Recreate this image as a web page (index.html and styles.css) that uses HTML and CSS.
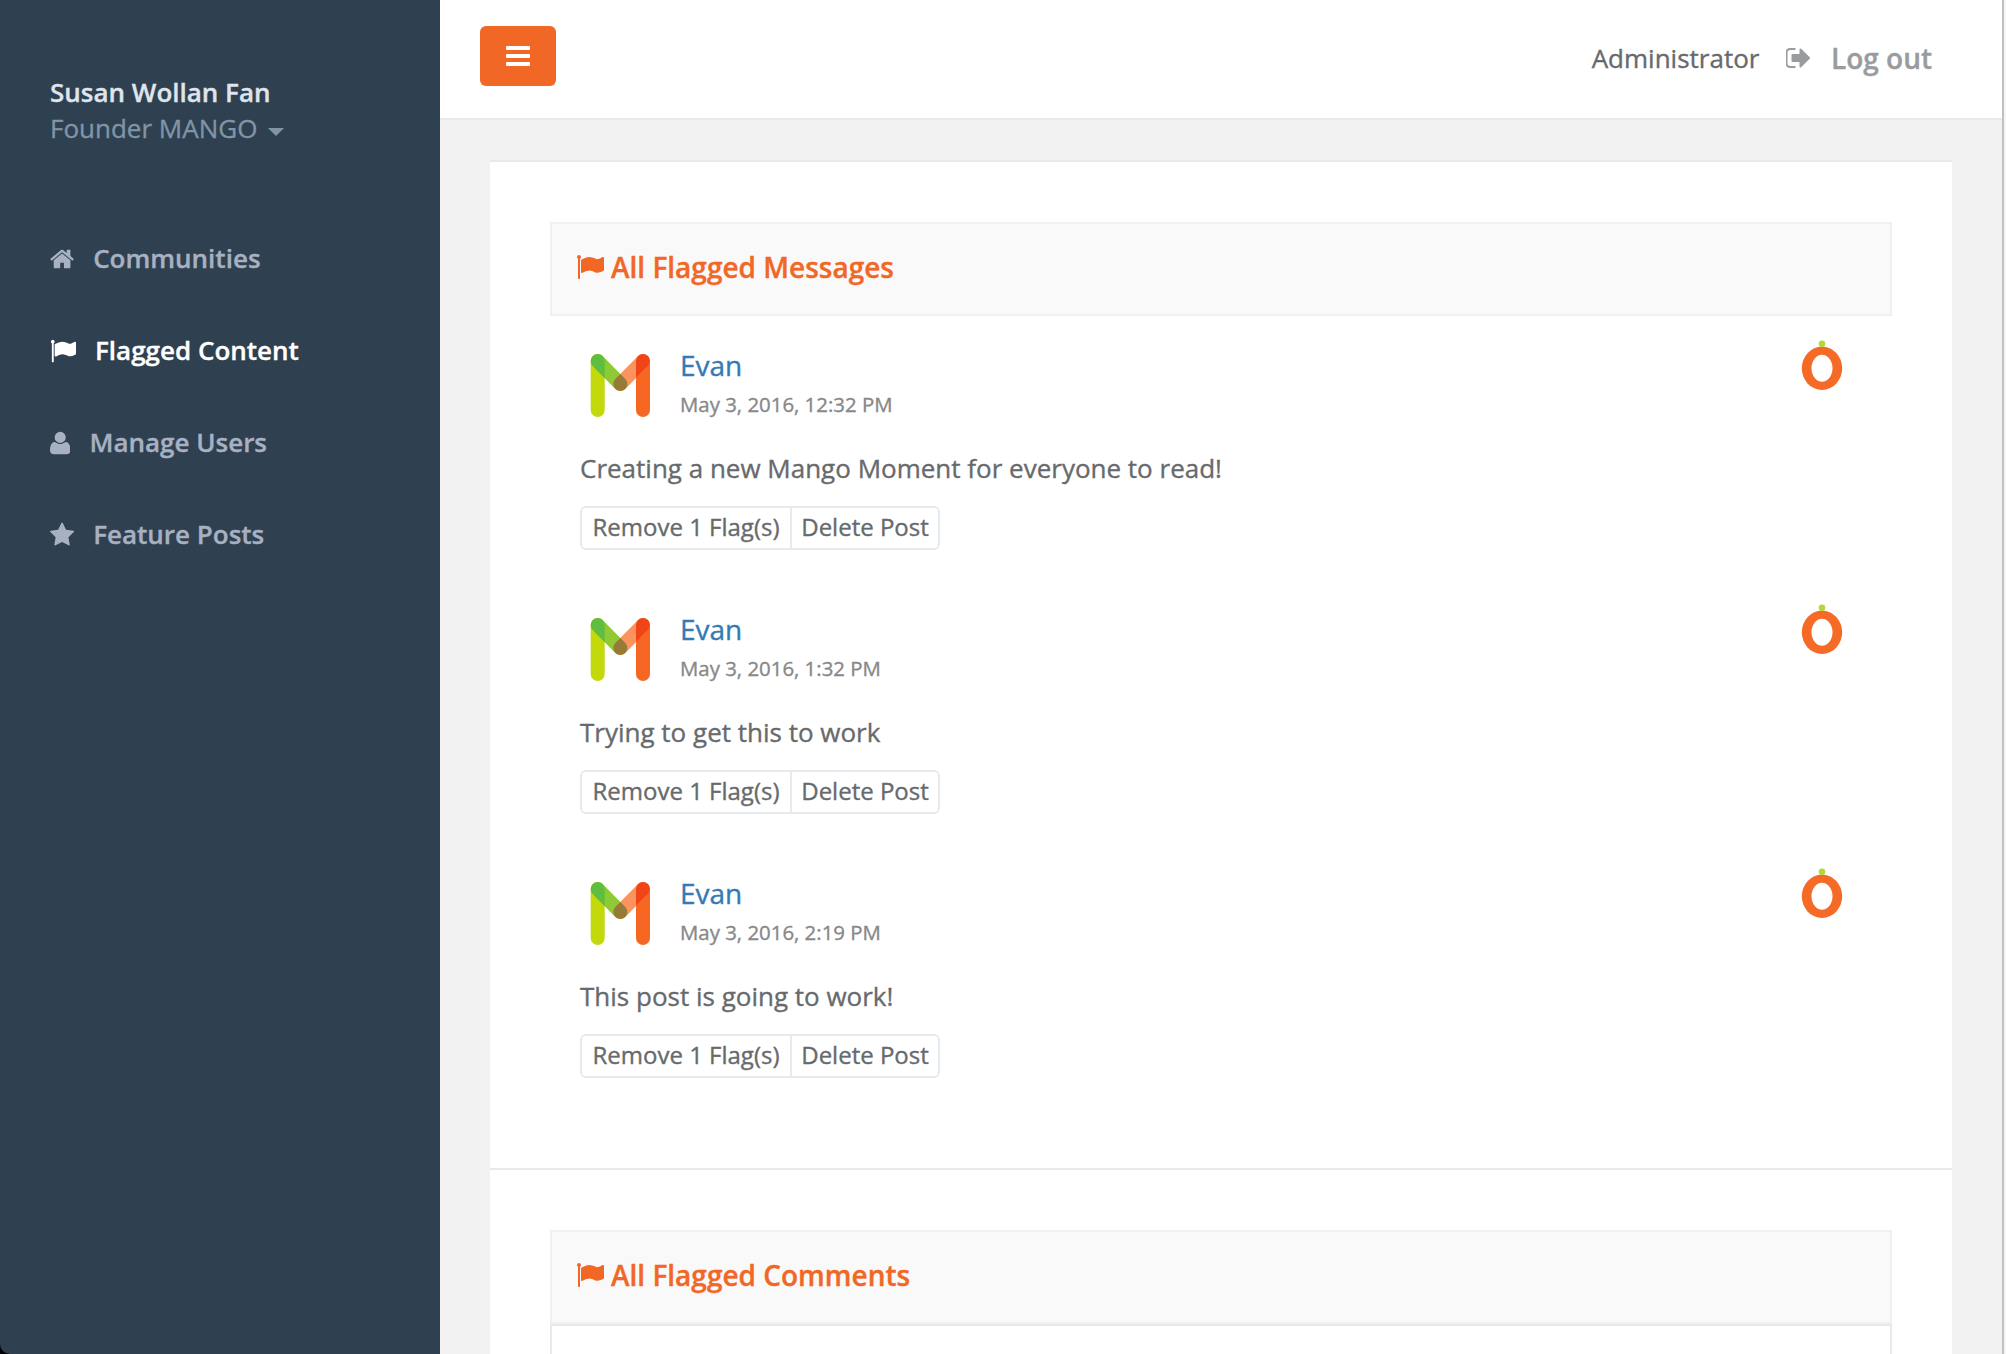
FILE: index.html
```html
<!DOCTYPE html>
<html lang="en">
<head>
<meta charset="utf-8">
<title>Flagged Content</title>
<link rel="stylesheet" href="styles.css">
</head>
<body>
<svg width="0" height="0" class="defs" aria-hidden="true">
  <symbol id="home" viewBox="64 0 1664 1792"><path d="M1472 992v480q0 26-19 45t-45 19h-384v-384h-256v384h-384q-26 0-45-19t-19-45v-480q0-1 .5-3t.5-3l575-474 575 474q1 2 1 6zm223-69l-62 74q-8 9-21 11h-3q-13 0-21-7l-692-577-692 577q-12 8-24 7-13-2-21-11l-62-74q-8-10-7-23.500t11-21.500l719-599q32-26 76-26t76 26l244 204v-195q0-14 9-23t23-9h192q14 0 23 9t9 23v408l219 182q10 8 11 21.500t-7 23.500z"/></symbol>
  <symbol id="flag" viewBox="0 0 1792 1792"><path d="M320 256q0 72-64 110v1266q0 13-9.500 22.500t-22.500 9.500h-64q-13 0-22.500-9.500t-9.500-22.500v-1266q-64-38-64-110 0-53 37.500-90.500t90.500-37.500 90.500 37.500 37.500 90.500zm1472 64v763q0 25-12.500 38.500t-39.500 27.500q-215 116-369 116-61 0-123.500-22t-108.500-48-115.500-48-142.500-22q-192 0-464 146-17 9-33 9-26 0-45-19t-19-45v-742q0-32 31-55 21-14 79-43 236-120 421-120 107 0 200 29t219 88q38 19 88 19 54 0 117.500-21t110-47 88-47 54.500-21q26 0 45 19t19 45z"/></symbol>
  <symbol id="user" viewBox="192 0 1408 1792"><path d="M1600 1405q0 120-73 189.500t-194 69.500h-874q-121 0-194-69.500t-73-189.500q0-53 3.500-103.500t14-109 26.500-108.500 43-97.500 62-81 85.500-53.500 111.500-20q9 0 42 21.500t74.500 48 108 48 133.500 21.500 133.500-21.500 108-48 74.500-48 42-21.500q61 0 111.500 20t85.500 53.500 62 81 43 97.500 26.500 108.500 14 109 3.500 103.500zm-320-893q0 159-112.500 271.500t-271.500 112.500-271.500-112.500-112.500-271.500 112.500-271.500 271.500-112.500 271.500 112.500 112.500 271.500z"/></symbol>
  <symbol id="star" viewBox="64 0 1664 1792"><path d="M1728 647q0 22-26 48l-363 354 86 500q1 7 1 20 0 21-10.500 35.500t-30.500 14.500q-19 0-40-12l-449-236-449 236q-22 12-40 12-21 0-31.500-14.500t-10.500-35.500q0-6 2-20l86-500-364-354q-25-27-25-48 0-37 56-46l502-73 225-455q19-41 49-41t49 41l225 455 502 73q56 9 56 46z"/></symbol>
  <symbol id="signout" viewBox="96 0 1568 1792"><path d="M704 1440q0 4 1 20t.5 26.500-3 23.500-10 19.500-20.500 6.500h-320q-119 0-203.500-84.500t-84.500-203.500v-704q0-119 84.500-203.500t203.500-84.500h320q13 0 22.500 9.500t9.500 22.500q0 4 1 20t.5 26.500-3 23.500-10 19.500-20.500 6.500h-320q-66 0-113 47t-47 113v704q0 66 47 113t113 47h312l11.500 1 11.500 3 8 5.500 7 9 2 13.500zm928-544q0 26-19 45l-544 544q-19 19-45 19t-45-19-19-45v-288h-448q-26 0-45-19t-19-45v-384q0-26 19-45t45-19h448v-288q0-26 19-45t45-19 45 19l544 544q19 19 19 45z"/></symbol>
  <symbol id="mango-m" viewBox="0 0 60 64">
    <clipPath id="m-left"><rect x="0.700" y="0" width="14" height="63" rx="7"/></clipPath>
    <clipPath id="m-right"><rect x="46" y="0" width="14" height="63" rx="7"/></clipPath>
    <clipPath id="m-down"><path d="M2.800 12L25.300 35A7 7 0 0 0 35.300 25L12.700 2A7 7 0 0 0 2.800 12z"/></clipPath>
    <rect x="0.700" y="0" width="14" height="63" rx="7" fill="#c3d90b"/>
    <rect x="46" y="0" width="14" height="63" rx="7" fill="#f56723"/>
    <path d="M7.700 7L30.300 30" stroke="#8fc933" stroke-width="14" stroke-linecap="round"/>
    <path d="M53 7L30.300 30" stroke="#fa935c" stroke-width="14" stroke-linecap="round"/>
    <path d="M7.700 7L30.300 30" stroke="#5fbe41" stroke-width="14" stroke-linecap="round" clip-path="url(#m-left)"/>
    <path d="M53 7L30.300 30" stroke="#f24517" stroke-width="14" stroke-linecap="round" clip-path="url(#m-right)"/>
    <path d="M53 7L30.300 30" stroke="#957b35" stroke-width="14" stroke-linecap="round" clip-path="url(#m-down)"/>
  </symbol>
  <symbol id="mango-o" viewBox="0 0 42 52">
    <path fill="#f66a27" fill-rule="evenodd" d="M0.800 28.300a20.200 21.700 0 1 1 40.400 0a20.200 21.700 0 1 1-40.400 0zM10.500 28.300a10.500 13.500 0 1 0 21 0a10.500 13.500 0 1 0-21 0z"/>
    <circle cx="21" cy="3.800" r="3.300" fill="#b5d832"/>
  </symbol>
</svg>
<div class="app">
  <nav class="sidebar">
    <div class="profile">
      <div class="profile-name">Susan Wollan Fan</div>
      <div class="profile-role"><span>Founder MANGO</span><i class="caret"></i></div>
    </div>
    <ul class="menu">
      <li><svg class="icon icon-home"><use href="#home"/></svg><span>Communities</span></li>
      <li class="active"><svg class="icon icon-flag"><use href="#flag"/></svg><span>Flagged Content</span></li>
      <li><svg class="icon icon-user"><use href="#user"/></svg><span>Manage Users</span></li>
      <li><svg class="icon icon-home"><use href="#star"/></svg><span>Feature Posts</span></li>
    </ul>
  </nav>
  <main class="page">
    <header class="topbar">
      <button class="toggle" aria-label="Menu"><i></i><i></i><i></i></button>
      <div class="account">
        <span class="role">Administrator</span>
        <svg class="icon-signout"><use href="#signout"/></svg>
        <a class="logout">Log out</a>
      </div>
    </header>
    <section class="panel">
      <h2 class="panel-title"><svg><use href="#flag"/></svg><span>All Flagged Messages</span></h2>
      <article class="post">
        <div class="post-head">
          <svg class="avatar"><use href="#mango-m"/></svg>
          <div class="byline"><a class="author">Evan</a><span class="date">May 3, 2016, 12:32 PM</span></div>
          <svg class="badge"><use href="#mango-o"/></svg>
        </div>
        <p class="message">Creating a new Mango Moment for everyone to read!</p>
        <div class="actions"><button class="remove">Remove 1 Flag(s)</button><button>Delete Post</button></div>
      </article>
      <article class="post">
        <div class="post-head">
          <svg class="avatar"><use href="#mango-m"/></svg>
          <div class="byline"><a class="author">Evan</a><span class="date">May 3, 2016, 1:32 PM</span></div>
          <svg class="badge"><use href="#mango-o"/></svg>
        </div>
        <p class="message">Trying to get this to work</p>
        <div class="actions"><button class="remove">Remove 1 Flag(s)</button><button>Delete Post</button></div>
      </article>
      <article class="post">
        <div class="post-head">
          <svg class="avatar"><use href="#mango-m"/></svg>
          <div class="byline"><a class="author">Evan</a><span class="date">May 3, 2016, 2:19 PM</span></div>
          <svg class="badge"><use href="#mango-o"/></svg>
        </div>
        <p class="message">This post is going to work!</p>
        <div class="actions"><button class="remove">Remove 1 Flag(s)</button><button>Delete Post</button></div>
      </article>
    </section>
    <section class="panel">
      <h2 class="panel-title"><svg><use href="#flag"/></svg><span>All Flagged Comments</span></h2>
      <div class="comments"></div>
    </section>
  </main>
  <div class="scroll-edge"></div>
</div>
</body>
</html>
```

FILE: styles.css
```css
* { box-sizing: border-box; }
body {
  margin: 0;
  background: #000;
  color: #676a6c;
  font: 26px/36px "Open Sans", "Noto Sans", sans-serif;
  -webkit-text-stroke: 0.35px;
}
button { font: inherit; color: inherit; }
svg { -webkit-text-stroke: 0; }
.defs { position: absolute; }
.app {
  display: flex;
  height: 1354px;
  overflow: hidden;
  border-bottom-left-radius: 10px;
}

.sidebar { flex: none; width: 440px; padding-top: 74px; background: #2f4050; }
.profile { padding: 0 50px; }
.profile-name { color: #dfe4ed; font-weight: 600; white-space: nowrap; }
.profile-role { display: flex; align-items: center; color: #8095a8; white-space: nowrap; }
.caret {
  margin: 7px 0 0 11px;
  border: 8px solid transparent;
  border-top-color: currentColor;
  border-bottom: 0;
}
.menu { margin: 66px 0 0; padding: 0; list-style: none; color: #a7b1c2; font-weight: 600; }
.menu li { display: flex; align-items: center; gap: 19px; height: 92px; padding-left: 50px; }
.menu .active { color: #fff; }
.icon { flex: none; height: 26px; margin-top: 1px; fill: currentColor; }
.icon-home { width: 24.140px; }
.icon-flag { width: 26px; }
.icon-user { width: 20.430px; }

.page { flex: 1; min-width: 0; background: #f2f2f2; }
.topbar {
  display: flex;
  justify-content: space-between;
  align-items: flex-start;
  height: 120px;
  padding: 26px 70px 0 40px;
  background: #fff;
  border-bottom: 2px solid #e7eaec;
}
.toggle {
  display: flex;
  flex-direction: column;
  align-items: center;
  gap: 4px;
  width: 76px;
  height: 60px;
  padding: 20px 0 0;
  background: #f16725;
  border: 0;
  border-radius: 6px;
}
.toggle i { width: 24px; height: 4px; border-radius: 1px; background: #fff; }
.account { display: flex; align-items: center; padding-top: 14px; }
.icon-signout { width: 24.500px; height: 28px; margin: 0 20px 0 27px; fill: #999c9e; }
.logout { color: #999c9e; font-size: 28px; font-weight: 600; line-height: 34px; }

.panel {
  width: 1462px;
  margin-left: 50px;
  padding: 60px;
  background: #fff;
  border-top: 2px solid #e7eaec;
}
.topbar + .panel { margin-top: 40px; }
.panel-title {
  display: flex;
  align-items: center;
  gap: 7px;
  height: 94px;
  margin: 0;
  padding: 0 0 4px 24px;
  background: #f9f9f9;
  border: 2px solid #f0f0f0;
  color: #f16725;
  font-size: 28px;
  font-weight: 600;
}
.panel-title svg { width: 28px; height: 28px; fill: currentColor; }
.comments { height: 120px; border: 2px solid #e7eaec; }

.post { height: 264px; padding: 24px 30px 0; }
.post-head { display: flex; align-items: flex-start; height: 108px; }
.avatar { width: 60px; height: 64px; margin: 14px 30px 0 10px; }
.byline { display: flex; flex-direction: column; flex: 1; padding-top: 6px; }
.author { color: #337ab7; font-size: 28px; line-height: 38px; }
.date { color: #888; font-size: 20.400px; line-height: 40px; }
.badge { width: 42px; height: 52px; margin-right: 19px; }
.message { margin: 0; padding-top: 2px; }
.actions { display: flex; margin-top: 20px; font-size: 24px; line-height: 38px; }
.actions button {
  width: 150px;
  height: 44px;
  padding: 0 0 2px;
  background: #fff;
  border: 2px solid #e7eaec;
  border-radius: 0 6px 6px 0;
  white-space: nowrap;
}
.actions .remove { width: 212px; margin-right: -2px; border-radius: 6px 0 0 6px; }

.scroll-edge { flex: none; width: 4px; background: #f5f5f5; border-left: 2px solid #c1c1c1; }
```
